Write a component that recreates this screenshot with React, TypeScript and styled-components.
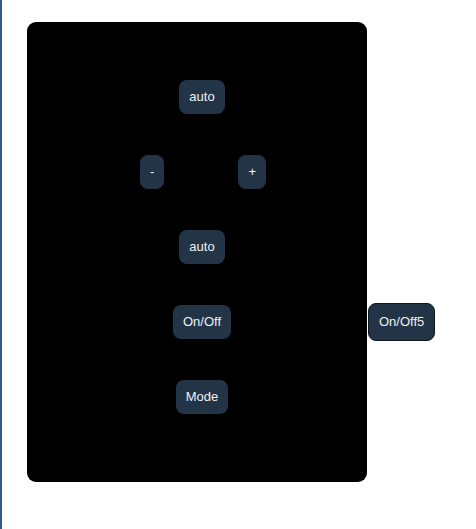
import React from "react";
import styled, { createGlobalStyle } from "styled-components";

const Global = createGlobalStyle`
  html {
    border-left: 2px solid #2b5b82;
    min-height: 100%;
    box-sizing: border-box;
  }
  html, body { height: 100%; }
  body {
    margin: 0;
    background: #ffffff;
    font-family: "Liberation Sans", Arial, sans-serif;
  }
`;

const Page = styled.div`
  display: flex;
  align-items: flex-start;
  padding: 22px 0 0 25px;
`;

const Panel = styled.div`
  width: 340px;
  height: 460px;
  box-sizing: border-box;
  background: #000000;
  border-radius: 9px;
  padding: 58px 0 0 10px;
  display: flex;
  flex-direction: column;
  align-items: center;
  gap: 41px;
`;

const Row = styled.div`
  display: flex;
  align-items: center;
  gap: 74px;
  padding-left: 2px;
`;

const Button = styled.button<{ $outlined?: boolean }>`
  font-family: "Liberation Sans", Arial, sans-serif;
  font-size: 13px;
  line-height: 14px;
  color: #eef1f4;
  background: #233446;
  border: ${(p) => (p.$outlined ? "1px solid #0c1620" : "none")};
  border-radius: 8px;
  padding: ${(p) => (p.$outlined ? "11px 10px" : "10px 10px")};
  margin: 0;
  cursor: pointer;
  white-space: nowrap;
`;

const Side = styled.div`
  margin-top: 281px;
  margin-left: 1px;
`;

export default function App() {
  return (
    <>
      <Global />
      <Page>
        <Panel>
          <Button>auto</Button>
          <Row>
            <Button>-</Button>
            <Button>+</Button>
          </Row>
          <Button>auto</Button>
          <Button>On/Off</Button>
          <Button>Mode</Button>
        </Panel>
        <Side>
          <Button $outlined>On/Off5</Button>
        </Side>
      </Page>
    </>
  );
}
